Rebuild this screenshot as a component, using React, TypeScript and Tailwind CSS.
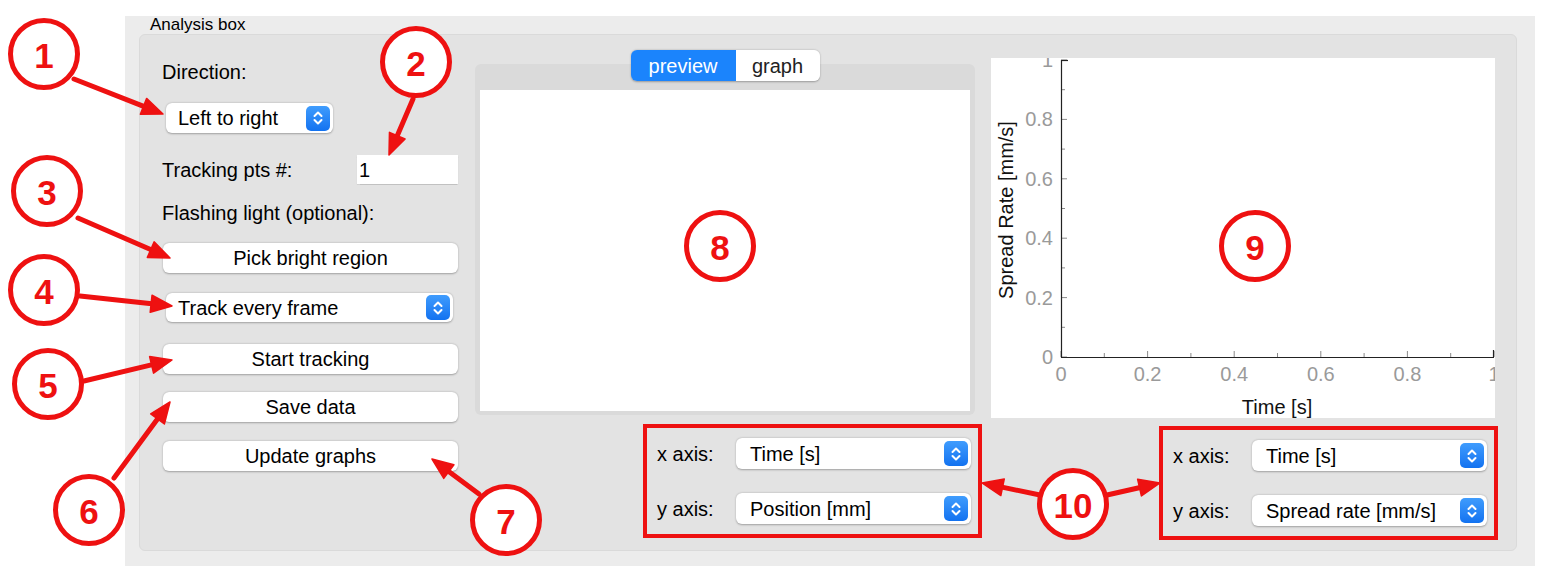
import type { ReactNode } from "react";

const RED = "#ee1111";

function Stepper() {
  return (
    <span className="flex h-[25px] w-[24px] shrink-0 items-center justify-center rounded-[5px] bg-gradient-to-b from-[#3f9cfd] to-[#1272f0]">
      <svg width="14" height="18" viewBox="0 0 14 18" fill="none" stroke="white" strokeWidth="2" strokeLinecap="round" strokeLinejoin="round">
        <path d="M3.5 7 L7 3.5 L10.5 7" />
        <path d="M3.5 11 L7 14.5 L10.5 11" />
      </svg>
    </span>
  );
}

function Select({ value, className = "" }: { value: string; className?: string }) {
  return (
    <div
      className={`flex items-center justify-between rounded-[6px] bg-white pl-[12px] pr-[3px] text-[20px] text-black shadow-[0_0.5px_2px_rgba(0,0,0,0.3)] ${className}`}
    >
      <span className="leading-none">{value}</span>
      <Stepper />
    </div>
  );
}

function Button({ children, className = "" }: { children: ReactNode; className?: string }) {
  return (
    <button className={`ml-[1px] h-[30px] w-[295px] rounded-[6px] bg-white text-[20px] text-black shadow-[0_0.5px_2px_rgba(0,0,0,0.3)] ${className}`}>
      {children}
    </button>
  );
}

function AxisGroup({ y, className = "" }: { y: string; className?: string }) {
  return (
    <div className={`flex w-[339px] flex-col gap-[24px] border-4 border-[#ee1111] py-[10px] pl-[10px] pr-[7px] ${className}`}>
      <div className="flex items-center">
        <span className="w-[79px] text-[20px]">x axis:</span>
        <Select value="Time [s]" className="h-[31px] w-[235px] pl-[14px]" />
      </div>
      <div className="flex items-center">
        <span className="w-[79px] text-[20px]">y axis:</span>
        <Select value={y} className="h-[31px] w-[235px] pl-[14px]" />
      </div>
    </div>
  );
}

function Plot() {
  const x0 = 70;
  const x1 = 503;
  const y0 = 299;
  const y1 = 2;
  const ticks = Array.from({ length: 11 }, (_, i) => i / 10);
  return (
    <div className="h-[360px] w-[504px] bg-white">
      <svg width="504" height="360" viewBox="0 0 504 360" className="block overflow-hidden" fontFamily="'Liberation Sans', Arial, sans-serif">
        {/* ticks */}
        {ticks.map((t, i) => {
          const yy = y0 - (y0 - y1) * t;
          const xx = x0 + (x1 - x0) * t;
          const major = i % 2 === 0;
          return (
            <g key={i} stroke="#8a8a8a" strokeWidth="1">
              <line x1={x0} y1={yy} x2={x0 + (major ? 6 : 4)} y2={yy} />
              <line x1={xx} y1={y0} x2={xx} y2={y0 - (major ? 6 : 4)} />
            </g>
          );
        })}
        <line x1={x0 + 0.5} y1={y1} x2={x0 + 0.5} y2={y0 + 0.5} stroke="#222" strokeWidth="1.2" />
        <line x1={x0} y1={y0 + 0.5} x2={x1} y2={y0 + 0.5} stroke="#222" strokeWidth="1.2" />
        <line x1={x0} y1={y1 + 0.5} x2={x0 + 7} y2={y1 + 0.5} stroke="#222" strokeWidth="1.2" />
        <line x1={x1 - 0.5} y1={y0} x2={x1 - 0.5} y2={y0 - 7} stroke="#222" strokeWidth="1.2" />
        {/* labels */}
        {[0, 0.2, 0.4, 0.6, 0.8, 1].map((t) => (
          <g key={t} fill="#9a9a9a" fontSize="20">
            <text x={62} y={y0 - (y0 - y1) * t} textAnchor="end" dominantBaseline="central">
              {String(t)}
            </text>
            <text x={x0 + (x1 - x0) * t} y={316} textAnchor="middle" dominantBaseline="central">
              {String(t)}
            </text>
          </g>
        ))}
        <text x={286} y={349} textAnchor="middle" dominantBaseline="central" fontSize="20" fill="#111">
          Time [s]
        </text>
        <text
          x={15}
          y={152}
          textAnchor="middle"
          dominantBaseline="central"
          fontSize="20"
          fill="#111"
          transform="rotate(-90 15 152)"
        >
          Spread Rate [mm/s]
        </text>
      </svg>
    </div>
  );
}

function Arrow({ x1, y1, x2, y2 }: { x1: number; y1: number; x2: number; y2: number }) {
  const dx = x2 - x1;
  const dy = y2 - y1;
  const len = Math.hypot(dx, dy);
  const ux = dx / len;
  const uy = dy / len;
  const hl = 21;
  const hw = 8.5;
  const bx = x2 - ux * hl;
  const by = y2 - uy * hl;
  const px = -uy;
  const py = ux;
  return (
    <g>
      <line x1={x1} y1={y1} x2={bx + ux * 3} y2={by + uy * 3} stroke={RED} strokeWidth="5" strokeLinecap="round" />
      <polygon
        points={`${x2},${y2} ${bx + px * hw},${by + py * hw} ${bx - px * hw},${by - py * hw}`}
        fill={RED}
        stroke={RED}
        strokeWidth="1.5"
        strokeLinejoin="round"
      />
    </g>
  );
}

const marks = [
  { n: "1", cx: 44, cy: 54 },
  { n: "2", cx: 416, cy: 62 },
  { n: "3", cx: 47, cy: 191 },
  { n: "4", cx: 44, cy: 290 },
  { n: "5", cx: 48, cy: 384 },
  { n: "6", cx: 89, cy: 510 },
  { n: "7", cx: 506, cy: 520 },
  { n: "8", cx: 720, cy: 246 },
  { n: "9", cx: 1255, cy: 246 },
  { n: "10", cx: 1073, cy: 504 },
];

const arrows = [
  { x1: 74, y1: 79, x2: 163, y2: 114 },
  { x1: 413, y1: 99, x2: 389, y2: 155 },
  { x1: 78, y1: 218, x2: 170, y2: 258 },
  { x1: 80, y1: 296, x2: 172, y2: 306 },
  { x1: 84, y1: 381, x2: 172, y2: 360 },
  { x1: 114, y1: 478, x2: 170, y2: 402 },
  { x1: 479, y1: 494, x2: 432, y2: 459 },
  { x1: 1040, y1: 495, x2: 982, y2: 483 },
  { x1: 1107, y1: 495, x2: 1160, y2: 483 },
];

function Annotations() {
  return (
    <svg
      width="1552"
      height="584"
      viewBox="0 0 1552 584"
      className="pointer-events-none absolute left-0 top-0"
      fontFamily="'Liberation Sans', Arial, sans-serif"
    >
      {arrows.map((a, i) => (
        <Arrow key={i} {...a} />
      ))}
      {marks.map((m) => (
        <g key={m.n}>
          <circle cx={m.cx} cy={m.cy} r="33.5" fill="white" stroke={RED} strokeWidth="5" />
          <text
            x={m.cx}
            y={m.cy + 1}
            textAnchor="middle"
            dominantBaseline="central"
            fontSize="35"
            fontWeight="bold"
            fill={RED}
          >
            {m.n}
          </text>
        </g>
      ))}
    </svg>
  );
}

export default function App() {
  return (
    <div className="relative h-[584px] w-[1552px] overflow-hidden bg-white pl-[125px] pt-[16px] font-['Liberation_Sans',Arial,sans-serif] text-black">
      {/* window */}
      <div className="h-[550px] w-[1410px] bg-[#ececec] pl-[14px]">
        <div className="h-[18px] pl-[11px] text-[17px] leading-[18px]">Analysis box</div>

        {/* group box */}
        <div className="flex h-[517px] w-[1378px] rounded-[6px] border border-[#dadada] bg-[#e3e3e3] pl-[22px]">
          {/* controls column */}
          <div className="flex w-[296px] flex-col pt-[25px]">
            <div className="text-[20px] leading-[24px]">Direction:</div>
            <Select value="Left to right" className="ml-[4px] mt-[19px] h-[30px] w-[167px]" />
            <div className="mt-[22px] flex h-[29px] items-center justify-between">
              <span className="text-[20px]">Tracking pts #:</span>
              <div className="flex h-[29px] w-[101px] items-center bg-white pl-[2px] text-[20px] shadow-[0_0.5px_1px_rgba(0,0,0,0.15)]">1</div>
            </div>
            <div className="mt-[17px] text-[20px] leading-[24px]">Flashing light (optional):</div>
            <Button className="mt-[18px] h-[29px]">Pick bright region</Button>
            <Select value="Track every frame" className="ml-[4px] mt-[20px] h-[29px] w-[287px]" />
            <Button className="mt-[22px]">Start tracking</Button>
            <Button className="mt-[18px]">Save data</Button>
            <Button className="mt-[19px]">Update graphs</Button>
          </div>

          {/* preview / graph tabs */}
          <div className="ml-[17px] flex w-[507px] flex-col pt-[15px]">
            <div className="relative z-10 -mb-[17px] flex w-[500px] justify-center">
              <div className="flex h-[31px] overflow-hidden rounded-[6px] text-[20px] shadow-[0_0.5px_2px_rgba(0,0,0,0.3)]">
                <span className="flex w-[105px] items-center justify-center bg-[#1b84fc] text-white">preview</span>
                <span className="flex w-[84px] items-center justify-center bg-white text-[#222]">graph</span>
              </div>
            </div>
            <div className="h-[351px] w-[500px] rounded-[6px] bg-[#dadada] px-[5px] pb-[4px] pt-[26px]">
              <div className="h-full w-full bg-white" />
            </div>
            <AxisGroup y="Position [mm]" className="mt-[9px] self-end" />
          </div>

          {/* plot */}
          <div className="ml-[9px] flex w-[507px] flex-col pt-[23px]">
            <Plot />
            <AxisGroup y="Spread rate [mm/s]" className="mt-[8px] self-end" />
          </div>
        </div>
      </div>

      <Annotations />
    </div>
  );
}
